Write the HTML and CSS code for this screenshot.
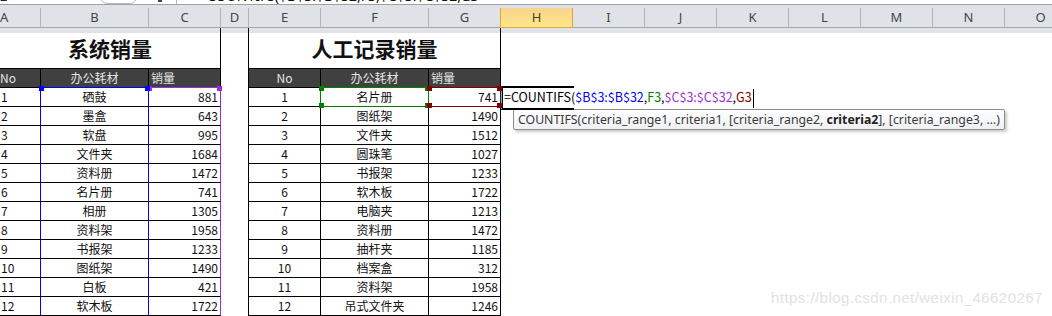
FILE: index.html
```html
<!DOCTYPE html>
<html lang="zh-CN">
<head>
<meta charset="utf-8">
<title>COUNTIFS</title>
<link rel="stylesheet" href="styles.css">
</head>
<body>
<div class="app">
  <div class="fbar">
    <div class="fb-name">2</div>
    <div class="fb-drop"></div>
    <div class="fb-arrow"></div>
    <div class="fb-sep"></div>
    <div class="fb-text">=COUNTIFS($B$3:$B$32,F3,$C$3:$C$32,G3</div>
  </div>
  <div class="sheet">
    <div class="grid">
      <div class="ch cha">A</div><div class="ch">B</div><div class="ch">C</div><div class="ch">D</div><div class="ch">E</div><div class="ch">F</div><div class="ch pre-sel">G</div><div class="ch sel">H</div><div class="ch">I</div><div class="ch">J</div><div class="ch">K</div><div class="ch">L</div><div class="ch">M</div><div class="ch">N</div><div class="ch">O</div>

      <div class="tt span3">系统销量</div><div class="dg dg-top"></div><div class="tt span3">人工记录销量</div><div class="rest"></div>

      <div class="hd hd-a">No</div><div class="hd bot-blue">办公耗材</div><div class="hd l bot-purple">销量</div><div class="dg"></div><div class="hd">No</div><div class="hd">办公耗材</div><div class="hd l">销量</div><div class="rest"></div>

      <div class="d a">1</div><div class="d b rel"><i class="hdl blue tl"></i><i class="hdl blue tr"></i>硒鼓</div><div class="d c r rel"><i class="hdl purple tl"></i><i class="hdl purple tr"></i>881</div><div class="dg"></div><div class="d">1</div><div class="d rel rng-green"><i class="hdl green tl"></i><i class="hdl green tr"></i><i class="hdl green bl"></i><i class="hdl green br"></i>名片册</div><div class="d r rel rng-maroon"><i class="hdl maroon tl"></i><i class="hdl maroon tr"></i><i class="hdl maroon bl"></i><i class="hdl maroon br"></i>741</div><div class="edit"><span class="k">=COUNTIFS(</span><span class="ref-b">$B$3:$B$32</span><span class="k">,</span><span class="ref-g">F3</span><span class="k">,</span><span class="ref-p">$C$3:$C$32</span><span class="k">,</span><span class="ref-m">G3</span><span class="caret"></span></div><div class="rest rest-i"></div>

      <div class="d a">2</div><div class="d b">墨盒</div><div class="d c r">643</div><div class="dg"></div><div class="d">2</div><div class="d">图纸架</div><div class="d r">1490</div><div class="rest"></div>
      <div class="d a">3</div><div class="d b">软盘</div><div class="d c r">995</div><div class="dg"></div><div class="d">3</div><div class="d">文件夹</div><div class="d r">1512</div><div class="rest"></div>
      <div class="d a">4</div><div class="d b">文件夹</div><div class="d c r">1684</div><div class="dg"></div><div class="d">4</div><div class="d">圆珠笔</div><div class="d r">1027</div><div class="rest"></div>
      <div class="d a">5</div><div class="d b">资料册</div><div class="d c r">1472</div><div class="dg"></div><div class="d">5</div><div class="d">书报架</div><div class="d r">1233</div><div class="rest"></div>
      <div class="d a">6</div><div class="d b">名片册</div><div class="d c r">741</div><div class="dg"></div><div class="d">6</div><div class="d">软木板</div><div class="d r">1722</div><div class="rest"></div>
      <div class="d a">7</div><div class="d b">相册</div><div class="d c r">1305</div><div class="dg"></div><div class="d">7</div><div class="d">电脑夹</div><div class="d r">1213</div><div class="rest"></div>
      <div class="d a">8</div><div class="d b">资料架</div><div class="d c r">1958</div><div class="dg"></div><div class="d">8</div><div class="d">资料册</div><div class="d r">1472</div><div class="rest"></div>
      <div class="d a">9</div><div class="d b">书报架</div><div class="d c r">1233</div><div class="dg"></div><div class="d">9</div><div class="d">抽杆夹</div><div class="d r">1185</div><div class="rest"></div>
      <div class="d a">10</div><div class="d b">图纸架</div><div class="d c r">1490</div><div class="dg"></div><div class="d">10</div><div class="d">档案盒</div><div class="d r">312</div><div class="rest"></div>
      <div class="d a">11</div><div class="d b">白板</div><div class="d c r">421</div><div class="dg"></div><div class="d">11</div><div class="d">资料架</div><div class="d r">1958</div><div class="rest"></div>
      <div class="d a">12</div><div class="d b">软木板</div><div class="d c r">1722</div><div class="dg"></div><div class="d">12</div><div class="d">吊式文件夹</div><div class="d r">1246</div><div class="rest"></div>
    </div>
  </div>
  <div class="tip">COUNTIFS(criteria_range1, criteria1, [criteria_range2, <b>criteria2</b>], [criteria_range3, ...)</div>
  <div class="wm">https://blog.csdn.net/weixin_46620267</div>
</div>
</body>
</html>
```

FILE: styles.css
```css
* { box-sizing: border-box; margin: 0; padding: 0; }
html, body { width: 1052px; height: 316px; overflow: hidden; background: #fff; }
body { font-family: "Noto Sans CJK SC", "Noto Sans", sans-serif; color: #000; }

.app { position: relative; width: 1052px; height: 316px; overflow: hidden; }

/* formula bar remnant (cut off at top) */
.fbar { height: 4px; display: flex; align-items: flex-end; overflow: hidden; background: #fff; }
.fb-name { width: 100px; height: 14px; margin-bottom: 1px; font: 13px/14px "Noto Sans", sans-serif; color: #222; }
.fb-drop { width: 37px; height: 14px; border: 1px solid #b9b9b9; border-radius: 7px; }
.fb-arrow { width: 4px; height: 14px; margin-left: 21px; border-bottom: 2px solid #444; margin-bottom: 2px; }
.fb-sep { width: 1px; height: 14px; margin-left: 14px; background: #b8b8b8; }
.fb-text { height: 14px; margin-left: 22px; margin-bottom: 1px; font: 14px/14px "Noto Sans", sans-serif; color: #111; white-space: nowrap; }

/* column header band */
.sheet { border-top: 1px solid #9ea1a5; background: linear-gradient(#dfe3e8 0, #dfe3e8 28px, #fff 28px); padding-top: 3px; }
.grid {
  display: grid;
  grid-template-columns: 41px 108px 72px 28px 72px 108px 72px repeat(8, 72px);
  grid-template-rows: 20px 41px 19px repeat(12, 19px);
  width: 1100px;
}

.ch {
  background: #dfe3e8;
  border-right: 1px solid #b2b6bb;
  border-bottom: 1px solid #a4a8ae;
  font: 13px/19px "Noto Sans", sans-serif;
  color: #454545;
  text-align: center;
}
.cha { padding-right: 32px; }
.pre-sel { border-right-color: #e3a33c; }
.ch.sel {
  background: linear-gradient(#f8d48c, #fee68a);
  border-right-color: #e3a33c;
  border-bottom-color: #e3a33c;
  color: #4a4225;
}

/* title row */
.tt {
  display: flex; align-items: center; justify-content: center;
  font-size: 21px; font-weight: 700; color: #111;
  border-right: 1px solid #000; border-bottom: 1px solid #000;
}
.span3 { grid-column: span 3; }
.dg { border-right: 1px solid #000; }
.rest { grid-column: span 8; }
.rest-i { grid-column: span 7; }

/* dark header row */
.hd {
  background: #404040; color: #e4e4e4;
  font-size: 12px; line-height: 18px; text-align: center;
  border-right: 1px solid #000; border-bottom: 1px solid #000;
  white-space: nowrap; overflow: hidden;
}
.hd.l { text-align: left; padding-left: 2px; }
.hd-a { text-align: left; padding-left: 0; }
.bot-blue { border-bottom-color: #0000ff; }
.bot-purple { border-bottom-color: #9b2fd6; }

/* data cells */
.d {
  font-size: 12px; line-height: 18px; text-align: center; color: #111;
  border-right: 1px solid #000; border-bottom: 1px solid #000;
  white-space: nowrap;
}
.d.r { text-align: right; padding-right: 2px; }
.d.a { text-align: left; padding-left: 1px; border-right-color: #0000ff; }
.d.b { border-right-color: #0000ff; }
.d.c { border-right-color: #9b2fd6; }
.rel { position: relative; }

/* range-finder rectangles and handles (overlays) */
.rng-green::after, .rng-maroon::after {
  content: ""; position: absolute; left: -1px; top: -1px; right: -1px; bottom: -1px;
}
.rng-green::after { border: 1px solid #008000; z-index: 2; }
.rng-maroon::after { border: 1px solid #800000; z-index: 1; }
.hdl { position: absolute; width: 5px; height: 5px; z-index: 3; }
.hdl.tl { left: -2px; top: -2px; }
.hdl.tr { right: -2px; top: -2px; }
.hdl.bl { left: -2px; bottom: -2px; }
.hdl.br { right: -2px; bottom: -2px; }
.hdl.blue { background: #0000ff; z-index: 4; }
.hdl.purple { background: #9b2fd6; }
.hdl.green { background: #008000; }
.hdl.maroon { background: #800000; }

/* in-cell editing */
.edit {
  position: relative;
  padding-left: 3px;
  font-size: 12.5px; line-height: 18px;
  white-space: nowrap;
  z-index: 1;
}
.edit::before {
  content: ""; position: absolute; left: 0; top: -2px; width: 72px; height: 20px;
  border-top: 2px solid #000; border-bottom: 2px solid #000; border-left: 1px solid #2fd3ef;
  box-shadow: inset 1px 0 0 #000;
}
.k { color: #000; }
.ref-b { color: #0000ff; }
.ref-g { color: #008000; }
.ref-p { color: #9b2fd6; }
.ref-m { color: #800000; }
.caret { display: inline-block; width: 1px; height: 19px; background: #000; vertical-align: middle; margin-left: 1px; }

/* function tooltip */
.tip {
  position: absolute; left: 513px; top: 109px; width: 492px; height: 21px;
  border: 1px solid #8d8d8d; border-radius: 2px;
  background: linear-gradient(#ffffff, #eef0f3);
  box-shadow: 2px 2px 3px rgba(0,0,0,0.22);
  font: 12.3px/19px "Noto Sans", sans-serif; color: #3a3a3a;
  padding-left: 4px; white-space: nowrap;
}
.tip b { color: #222; }

/* watermark */
.wm {
  position: absolute; left: 771px; top: 289px;
  font: 15px/18px "Liberation Sans", Arial, sans-serif; letter-spacing: 0.45px; color: #e2e2e2;
  white-space: nowrap;
}
```
